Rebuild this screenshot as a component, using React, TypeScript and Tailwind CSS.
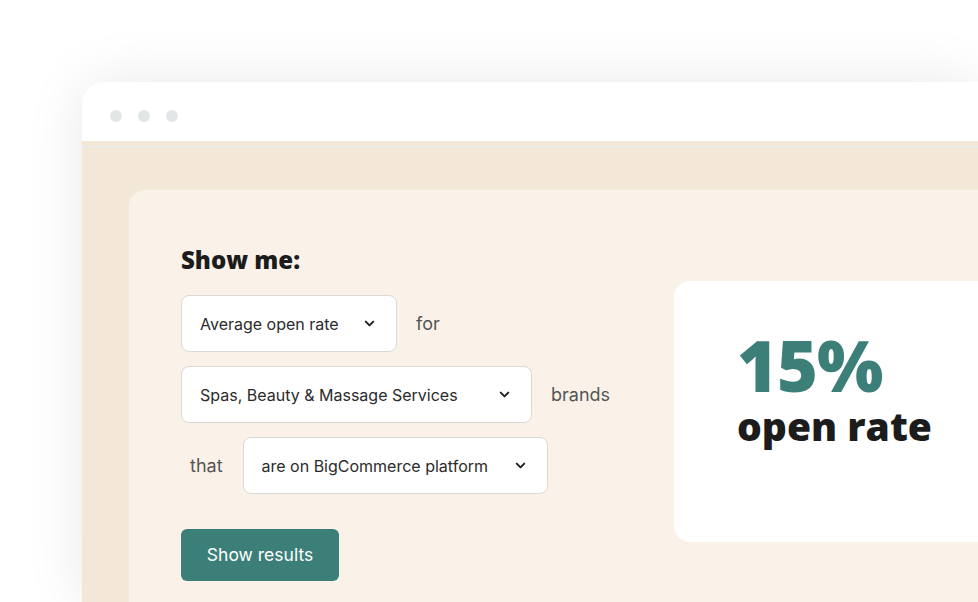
import { ChevronDown } from 'lucide-react'

const body = { fontFamily: 'Inter, "Liberation Sans", sans-serif' }
const heading = { fontFamily: '"Open Sans", "Liberation Sans", sans-serif' }

function Select({ label, width }: { label: string; width: string }) {
  return (
    <div
      className={`${width} h-[57px] flex items-center justify-between pl-[18px] pr-[19px] rounded-lg border border-[#d9d9d6] bg-white text-[16px] text-[#2b2b2b]`}
    >
      <span>{label}</span>
      <ChevronDown className="w-[15px] h-[15px] text-[#222]" strokeWidth={3.2} />
    </div>
  )
}

export default function App() {
  return (
    <div className="w-[978px] h-[602px] bg-white overflow-hidden pl-[82px] pt-[82px]" style={body}>
      <div className="h-full rounded-tl-[22px] bg-white shadow-[0_0_60px_rgba(0,0,0,0.09)] overflow-hidden flex flex-col">
        <div className="h-[59px] shrink-0 flex items-center gap-[16px] pl-[28px] pt-[8px]">
          <span className="w-[12px] h-[12px] rounded-full bg-[#e1e6e6]" />
          <span className="w-[12px] h-[12px] rounded-full bg-[#e1e6e6]" />
          <span className="w-[12px] h-[12px] rounded-full bg-[#e1e6e6]" />
        </div>
        <div className="h-[5px] shrink-0 bg-[#f3e8d8]" />
        <div className="h-[2px] shrink-0 bg-[#ebebe7]" />
        <div className="flex-1 bg-[#f3e8d8] pl-[47px] pt-[42px]">
          <div className="h-full rounded-tl-[16px] bg-[#faf2e9] pl-[52px] pt-[55px] flex">
            <div className="w-[493px] shrink-0">
              <h2 className="text-[24px] font-extrabold text-[#1c1c1c] leading-[30px]" style={heading}>
                Show me:
              </h2>
              <div className="mt-[20px] flex flex-col gap-[14px]">
                <div className="flex items-center gap-[19px]">
                  <Select label="Average open rate" width="w-[216px]" />
                  <span className="text-[18px] text-[#555]">for</span>
                </div>
                <div className="flex items-center gap-[19px]">
                  <Select label="Spas, Beauty & Massage Services" width="w-[351px]" />
                  <span className="text-[18px] text-[#555]">brands</span>
                </div>
                <div className="flex items-center gap-[20px] pl-[9px]">
                  <span className="text-[18px] text-[#555]">that</span>
                  <Select label="are on BigCommerce platform" width="w-[305px]" />
                </div>
              </div>
              <button className="mt-[35px] w-[158px] h-[52px] rounded-md bg-[#3b7f78] text-white text-[17.5px]">
                Show results
              </button>
            </div>
            <div className="flex-1 mt-[36px] h-[261px] rounded-l-[16px] bg-white pl-[63px] pt-[49px]" style={heading}>
              <div className="text-[70px] leading-[70px] font-extrabold text-[#3b7f78] tracking-[-1px]">15%</div>
              <div className="mt-[4px] text-[39px] leading-[44px] font-extrabold text-[#1c1c1c]">open rate</div>
            </div>
          </div>
        </div>
      </div>
    </div>
  )
}
